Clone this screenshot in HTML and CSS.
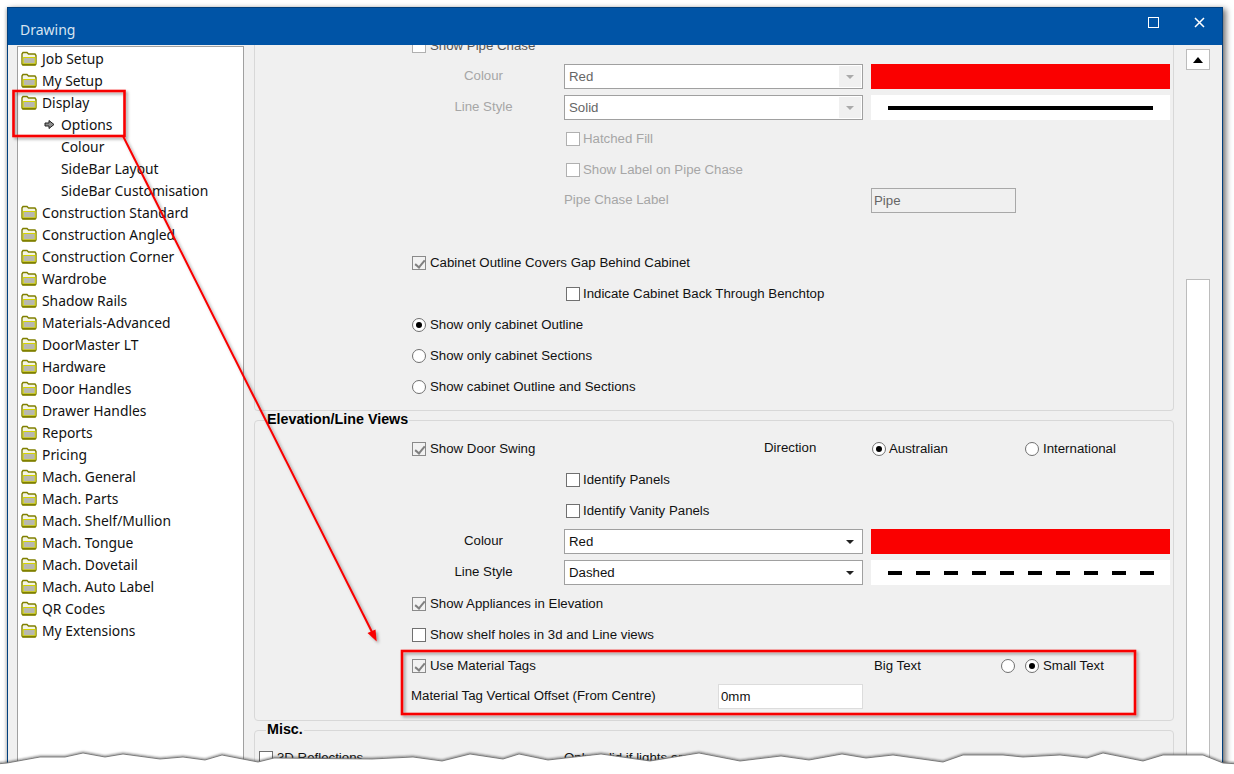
FILE: index.html
```html
<!DOCTYPE html>
<html lang="en">
<head>
  <meta charset="UTF-8">
  <title>Drawing</title>
  <link rel="stylesheet" href="styles.css">
</head>
<body>

<!-- folder icon, reused for every tree row -->
<svg class="defs" width="0" height="0">
  <symbol id="folder" viewBox="0 0 16 15">
    <path d="M1 3 L2 1.5 H6 L7.5 3 H14 L15 4.5 V13 L14 14 H2 L1 13 Z" fill="#f4f4e4" stroke="#808000" stroke-width="1.4"/>
    <path d="M2.2 6.5 H14.2 V12.8 H2.2 Z" fill="#b8b8b0" stroke="#d4d400" stroke-width="1"/>
    <path d="M1 13.6 H15" stroke="#808000" stroke-width="1.4"/>
  </symbol>
</svg>

<div class="window">
  <header class="titlebar">
    <span class="title">Drawing</span>
    <span class="max-btn"></span>
    <svg class="close-btn" width="11" height="11" viewBox="0 0 11 11"><path d="M1 1 L10 10 M10 1 L1 10" stroke="#fff" stroke-width="1.5"/></svg>
  </header>

  <div class="body">
    <!-- left hand tree -->
    <nav class="tree">
      <div class="node"><svg class="folder"><use href="#folder"/></svg>Job Setup</div>
      <div class="node"><svg class="folder"><use href="#folder"/></svg>My Setup</div>
      <div class="node"><svg class="folder"><use href="#folder"/></svg>Display</div>
      <div class="node child">
        <svg class="arrow" width="11" height="11" viewBox="0 0 11 11"><path d="M1 4 H5 V1.5 L10 5.5 L5 9.5 V7 H1 Z" fill="#8c8c8c" stroke="#222" stroke-width="1"/></svg>
        Options
      </div>
      <div class="node child">Colour</div>
      <div class="node child">SideBar Layout</div>
      <div class="node child">SideBar Customisation</div>
      <div class="node"><svg class="folder"><use href="#folder"/></svg>Construction Standard</div>
      <div class="node"><svg class="folder"><use href="#folder"/></svg>Construction Angled</div>
      <div class="node"><svg class="folder"><use href="#folder"/></svg>Construction Corner</div>
      <div class="node"><svg class="folder"><use href="#folder"/></svg>Wardrobe</div>
      <div class="node"><svg class="folder"><use href="#folder"/></svg>Shadow Rails</div>
      <div class="node"><svg class="folder"><use href="#folder"/></svg>Materials-Advanced</div>
      <div class="node"><svg class="folder"><use href="#folder"/></svg>DoorMaster LT</div>
      <div class="node"><svg class="folder"><use href="#folder"/></svg>Hardware</div>
      <div class="node"><svg class="folder"><use href="#folder"/></svg>Door Handles</div>
      <div class="node"><svg class="folder"><use href="#folder"/></svg>Drawer Handles</div>
      <div class="node"><svg class="folder"><use href="#folder"/></svg>Reports</div>
      <div class="node"><svg class="folder"><use href="#folder"/></svg>Pricing</div>
      <div class="node"><svg class="folder"><use href="#folder"/></svg>Mach. General</div>
      <div class="node"><svg class="folder"><use href="#folder"/></svg>Mach. Parts</div>
      <div class="node"><svg class="folder"><use href="#folder"/></svg>Mach. Shelf/Mullion</div>
      <div class="node"><svg class="folder"><use href="#folder"/></svg>Mach. Tongue</div>
      <div class="node"><svg class="folder"><use href="#folder"/></svg>Mach. Dovetail</div>
      <div class="node"><svg class="folder"><use href="#folder"/></svg>Mach. Auto Label</div>
      <div class="node"><svg class="folder"><use href="#folder"/></svg>QR Codes</div>
      <div class="node"><svg class="folder"><use href="#folder"/></svg>My Extensions</div>
    </nav>

    <!-- scrolled options -->
    <main class="options">
      <div class="scroller">
        <div class="group first">
          <div class="row disabled">
            <label class="col-a dark"><span class="check"></span>Show Pipe Chase</label>
          </div>
          <div class="row disabled">
            <span class="field-label">Colour</span>
            <div class="combo"><span>Red</span><span class="drop"></span></div>
            <div class="swatch red"></div>
          </div>
          <div class="row disabled">
            <span class="field-label">Line Style</span>
            <div class="combo"><span>Solid</span><span class="drop"></span></div>
            <div class="swatch"><span class="line solid"></span></div>
          </div>
          <div class="row disabled">
            <label class="col-b"><span class="check"></span>Hatched Fill</label>
          </div>
          <div class="row disabled">
            <label class="col-b"><span class="check"></span>Show Label on Pipe Chase</label>
          </div>
          <div class="row disabled">
            <span class="col-b raised">Pipe Chase Label</span>
            <div class="textbox pipe">Pipe</div>
          </div>
          <div class="row"></div>
          <div class="row">
            <label class="col-a"><span class="check on"></span>Cabinet Outline Covers Gap Behind Cabinet</label>
          </div>
          <div class="row">
            <label class="col-b"><span class="check"></span>Indicate Cabinet Back Through Benchtop</label>
          </div>
          <div class="row">
            <label class="col-a"><span class="radio on"></span>Show only cabinet Outline</label>
          </div>
          <div class="row">
            <label class="col-a"><span class="radio"></span>Show only cabinet Sections</label>
          </div>
          <div class="row">
            <label class="col-a"><span class="radio"></span>Show cabinet Outline and Sections</label>
          </div>
        </div>

        <fieldset class="group">
          <legend>Elevation/Line Views</legend>
          <div class="row">
            <label class="col-a"><span class="check on"></span>Show Door Swing</label>
            <span class="col-d raised">Direction</span>
            <label class="col-e"><span class="radio on"></span>Australian</label>
            <label class="col-g"><span class="radio"></span>International</label>
          </div>
          <div class="row">
            <label class="col-b"><span class="check"></span>Identify Panels</label>
          </div>
          <div class="row">
            <label class="col-b"><span class="check"></span>Identify Vanity Panels</label>
          </div>
          <div class="row">
            <span class="field-label">Colour</span>
            <div class="combo"><span>Red</span><span class="drop"></span></div>
            <div class="swatch red"></div>
          </div>
          <div class="row">
            <span class="field-label">Line Style</span>
            <div class="combo"><span>Dashed</span><span class="drop"></span></div>
            <div class="swatch"><span class="line dashed"></span></div>
          </div>
          <div class="row">
            <label class="col-a"><span class="check on"></span>Show Appliances in Elevation</label>
          </div>
          <div class="row">
            <label class="col-a"><span class="check"></span>Show shelf holes in 3d and Line views</label>
          </div>
          <div class="row">
            <label class="col-a"><span class="check on"></span>Use Material Tags</label>
            <span class="col-e big-text">Big Text</span>
            <span class="col-f"><span class="radio"></span></span>
            <label class="col-g"><span class="radio on"></span>Small Text</label>
          </div>
          <div class="row">
            <span class="col-a raised">Material Tag Vertical Offset (From Centre)</span>
            <div class="textbox offset">0mm</div>
          </div>
        </fieldset>

        <fieldset class="group misc">
          <legend>Misc.</legend>
          <div class="row">
            <label class="col-left"><span class="check"></span>3D Reflections</label>
            <span class="col-b">Only valid if lights are on</span>
          </div>
        </fieldset>
      </div>

      <div class="scrollbar">
        <div class="scroll-up"><span class="up-tri"></span></div>
        <div class="scroll-thumb"></div>
      </div>
    </main>
  </div>
</div>

<!-- callouts drawn on top of the screenshot, plus the torn bottom edge -->
<svg class="overlay" width="1234" height="774" viewBox="0 0 1234 774">
  <defs>
    <filter id="soft" x="-5%" y="-5%" width="110%" height="110%">
      <feDropShadow dx="2" dy="2" stdDeviation="1.5" flood-color="#000" flood-opacity="0.35"/>
    </filter>
    <filter id="tear" x="-2%" y="-50%" width="104%" height="200%">
      <feDropShadow dx="0" dy="-1" stdDeviation="0.8" flood-color="#000" flood-opacity="0.45"/>
    </filter>
  </defs>
  <g filter="url(#soft)" fill="none" stroke="#f80000" stroke-width="2.6">
    <rect x="13.5" y="91" width="111" height="45"/>
    <rect x="402" y="651" width="733" height="63"/>
    <path d="M123 136 L372 632" stroke-width="2"/>
    <path d="M376.7 641.5 L367.5 633 L375.5 629.5 Z" fill="#f80000" stroke="none"/>
  </g>
  <path filter="url(#tear)" fill="#fff" stroke="#666" stroke-width="0.8"
    d="M-4 764 L7 763 L40 757 L65 757 L83 753 L105 757 L123 754 L160 759 L183 757 L205 760 L222 755 L258 762 L274 758 L372 759 L413 757 L442 761 L470 754 L503 759 L519 754 L548 760 L601 754 L650 761 L699 753 L740 761 L781 756 L809 760 L842 754 L866 758 L893 755 L943 762 L963 755 L1003 755 L1023 757 L1060 755 L1087 758 L1103 753 L1143 761 L1163 755 L1203 755 L1223 763 L1240 764 L1240 780 L-4 780 Z"/>
</svg>

</body>
</html>
```

FILE: styles.css
```css
* {
  box-sizing: border-box;
}
html, body {
  margin: 0;
  height: 774px;
  overflow: hidden;
  background: #fff;
}
body {
  position: relative;
  padding: 7px 11px 0 7px;
  font-family: "Liberation Sans", Arial, sans-serif;
  font-size: 13.25px;
  color: #111;
}
.defs {
  position: absolute;
}

/* Window frame */
.window {
  height: 770px;
  border: 1px solid #003f7d;
  background: #f0f0f0;
  box-shadow: 3px 2px 6px rgba(0,0,0,0.55), -1px 1px 3px rgba(0,0,0,0.2);
}
.titlebar {
  height: 37px;
  background: #0054a6;
  display: flex;
  align-items: center;
  padding: 6px 17px 0 12px;
}
.title {
  font-family: "Noto Sans", sans-serif;
  font-size: 14px;
  color: #d8e4f0;
  flex: 1;
}
.max-btn {
  width: 11px;
  height: 11px;
  border: 1.5px solid #fff;
  margin: -15px 35px 0 0;
}
.close-btn {
  margin-top: -15px;
}
.body {
  display: flex;
  height: 730px;
}

/* Tree */
.tree {
  width: 227px;
  margin: 1px 10px 0 9px;
  padding: 0 0 0 3px;
  background: #fff;
  border: 1px solid #a0a0a0;
  font-family: "Noto Sans", sans-serif;
  font-size: 13.85px;
}
.node {
  height: 22px;
  display: flex;
  align-items: center;
  gap: 5px;
  white-space: nowrap;
}
.node.child {
  padding-left: 40px;
  position: relative;
}
.node.child .arrow {
  position: absolute;
  left: 23px;
  top: 6px;
}
.folder {
  width: 16px;
  height: 15px;
  flex: none;
}

/* Right hand options */
.options {
  flex: 1;
  display: flex;
  overflow: hidden;
  min-width: 0;
}
.scroller {
  width: 920px;
  margin-top: -14px;
  flex: none;
}
.group {
  width: 920px;
  margin: 1px 0 0;
  padding: 5px 0 8px;
  border: 1px solid #d8d8d8;
  border-radius: 4px;
  min-width: 0;
}
.group.first {
  padding-top: 0;
  margin-top: -1px;
  height: 381px;
  border-top: none;
}
.group.misc {
  padding-top: 4px;
}
.group legend {
  margin-left: 11px;
  padding: 0 1px;
  height: 16px;
  line-height: 14px;
  font-weight: bold;
  font-size: 14.3px;
  color: #000;
}

/* Every form line sits on the same set of columns */
.row {
  height: 31px;
  display: grid;
  grid-template-columns: 3px 153px 153px 154px 46px 107px 130px 24px 145px;
  align-items: center;
  white-space: nowrap;
}
.row label, .row > span {
  display: flex;
  align-items: center;
}
.col-left { grid-column: 2 / 3; }
.col-a { grid-column: 3 / 5; }
label.col-a { margin-left: 1px; }
.col-b { grid-column: 4 / 6; }
.col-d { grid-column: 6; }
.col-e { grid-column: 7; }
.col-f { grid-column: 8; }
.col-g { grid-column: 9; }
.row .col-left { margin-left: 1px; }
.big-text { margin-left: 3px; }
label.col-e { margin-left: 1px; }
label.col-e .radio { margin-right: 3px; }

/* these labels sit a pixel above the centre of their line */
.row > .raised, .field-label {
  margin-bottom: 2px;
}
.field-label {
  grid-column: 3;
  justify-content: center;
  padding-right: 8px;
}
.row.disabled {
  color: #a6a6a6;
}
.row.disabled .dark {
  color: #555;
}

/* Controls */
.check, .radio {
  flex: none;
  display: inline-block;
  width: 14px;
  height: 14px;
  margin-right: 4px;
  background: #fff;
  border: 1px solid #707070;
  position: relative;
}
.row label.col-b .check {
  margin: 0 3px 0 2px;
}
.disabled .check {
  border-color: #b0b0b0;
}
.check.on {
  background: #f2f2f2;
  border-color: #8a8a8a;
}
.check.on::after {
  content: "";
  position: absolute;
  left: 4px;
  top: 1px;
  width: 4px;
  height: 8px;
  border: solid #808080;
  border-width: 0 2px 2px 0;
  transform: rotate(40deg);
}
.radio {
  border-radius: 50%;
}
.radio.on::after {
  content: "";
  position: absolute;
  left: 3px;
  top: 3px;
  width: 6px;
  height: 6px;
  border-radius: 50%;
  background: #000;
}
.combo {
  grid-column: 4 / 6;
  height: 25px;
  margin-right: 8px;
  width: 299px;
  padding: 0 4px 0 4px;
  background: #fff;
  border: 1px solid #a0a0a0;
  display: flex;
  align-items: center;
  justify-content: space-between;
}
.disabled .combo {
  color: #666;
}
.drop {
  width: 22px;
  height: 23px;
  margin-right: -3px;
  display: flex;
  align-items: center;
  justify-content: center;
}
.drop::after {
  content: "";
  border: 4px solid transparent;
  border-top-color: #222;
  border-bottom: none;
}
.disabled .drop {
  background: #f0f0f0;
  height: 21px;
}
.disabled .drop::after {
  border-top-color: #aaa;
}
.swatch {
  grid-column: 7 / 10;
  width: 299px;
  height: 25px;
  background: #fff;
  display: flex;
  align-items: center;
  justify-content: center;
}
.swatch.red {
  background: #fa0000;
}
.line.solid {
  width: 265px;
  height: 4px;
  background: #000;
}
.line.dashed {
  width: 266px;
  height: 4px;
  background: repeating-linear-gradient(90deg, #000 0 14px, transparent 14px 28px);
}
.textbox {
  height: 25px;
  padding: 0 2px;
  display: flex;
  align-items: center;
  color: #111;
}
.textbox.pipe {
  grid-column: 7 / 9;
  width: 145px;
  background: #f0f0f0;
  border: 1px solid #a8a8a8;
  color: #666;
}
.textbox.offset {
  grid-column: 5 / 7;
  width: 145px;
  margin-left: 0;
  background: #fff;
  border: 1px solid #dcdcdc;
}

/* Scrollbar */
.scrollbar {
  flex: none;
  width: 48px;
  padding: 4px 0 0 12px;
}
.scroll-up, .scroll-thumb {
  width: 24px;
  background: #fff;
  border: 1px solid #bcbcbc;
}
.scroll-up {
  height: 21px;
  display: flex;
  align-items: center;
  justify-content: center;
}
.up-tri {
  border: 5px solid transparent;
  border-left-width: 5px;
  border-bottom: 6px solid #000;
  border-top: none;
}
.scroll-thumb {
  margin-top: 209px;
  height: 520px;
}

/* Annotations */
.overlay {
  position: absolute;
  left: 0;
  top: 0;
  pointer-events: none;
}
```
